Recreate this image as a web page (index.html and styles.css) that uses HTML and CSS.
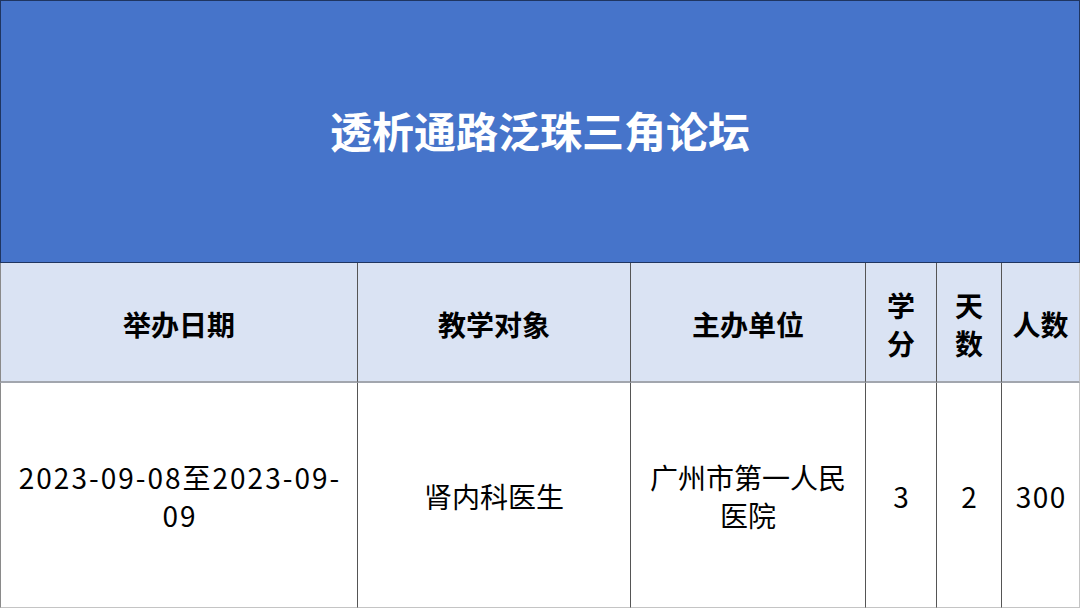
FILE: index.html
```html
<!DOCTYPE html>
<html lang="zh-CN">
<head>
<meta charset="utf-8">
<title>透析通路泛珠三角论坛</title>
<link rel="stylesheet" href="styles.css">
</head>
<body>
<div class="page">
  <div class="banner">透析通路泛珠三角论坛</div>
  <div class="grid">
    <div class="cell head first">举办日期</div>
    <div class="cell head">教学对象</div>
    <div class="cell head">主办单位</div>
    <div class="cell head narrow">学<br>分</div>
    <div class="cell head narrow">天<br>数</div>
    <div class="cell head last">人数</div>
    <div class="cell body first"><span class="num">2023-09-08至2023-09-<br>09</span></div>
    <div class="cell body">肾内科医生</div>
    <div class="cell body">广州市第一人民<br>医院</div>
    <div class="cell body"><span class="num-sm">3</span></div>
    <div class="cell body"><span class="num-sm">2</span></div>
    <div class="cell body last"><span class="num-sm">300</span></div>
  </div>
</div>
</body>
</html>
```

FILE: styles.css
```css
* { box-sizing: border-box; }
html, body { margin: 0; padding: 0; background: #ffffff; }
body {
  width: 1080px;
  height: 608px;
  overflow: hidden;
  font-family: "Noto Sans CJK SC", "Noto Sans", sans-serif;
  color: #000000;
}
.page {
  display: flex;
  flex-direction: column;
  width: 1080px;
  height: 608px;
}
.banner {
  height: 263px;
  background: #4674CA;
  border: 1px solid #1F3560;
  color: #ffffff;
  font-size: 42px;
  font-weight: 700;
  display: flex;
  align-items: center;
  justify-content: center;
  padding-bottom: 4px;
}
.grid {
  display: grid;
  grid-template-columns: 358px 273px 235px 71px 65px 78px;
  grid-template-rows: 120px 225px;
}
.cell {
  display: flex;
  align-items: center;
  justify-content: center;
  text-align: center;
  font-size: 28px;
  line-height: 38px;
  border-right: 1px solid #555555;
  white-space: nowrap;
}
.head {
  background: #DAE3F3;
  font-weight: 700;
  border-bottom: 2px solid #A2A6AE;
  padding-top: 4px;
}
.body {
  background: #ffffff;
  border-bottom: 1px solid #C4C4C4;
  padding-top: 2px;
}
.num {
  letter-spacing: 2px;
  margin-right: -2px;
}
.num-sm {
  letter-spacing: 1.5px;
  margin-right: -1.5px;
}
.first { border-left: 1px solid #8A8A8A; }
.last { border-right: 1px solid #C4C4C4; }
```
